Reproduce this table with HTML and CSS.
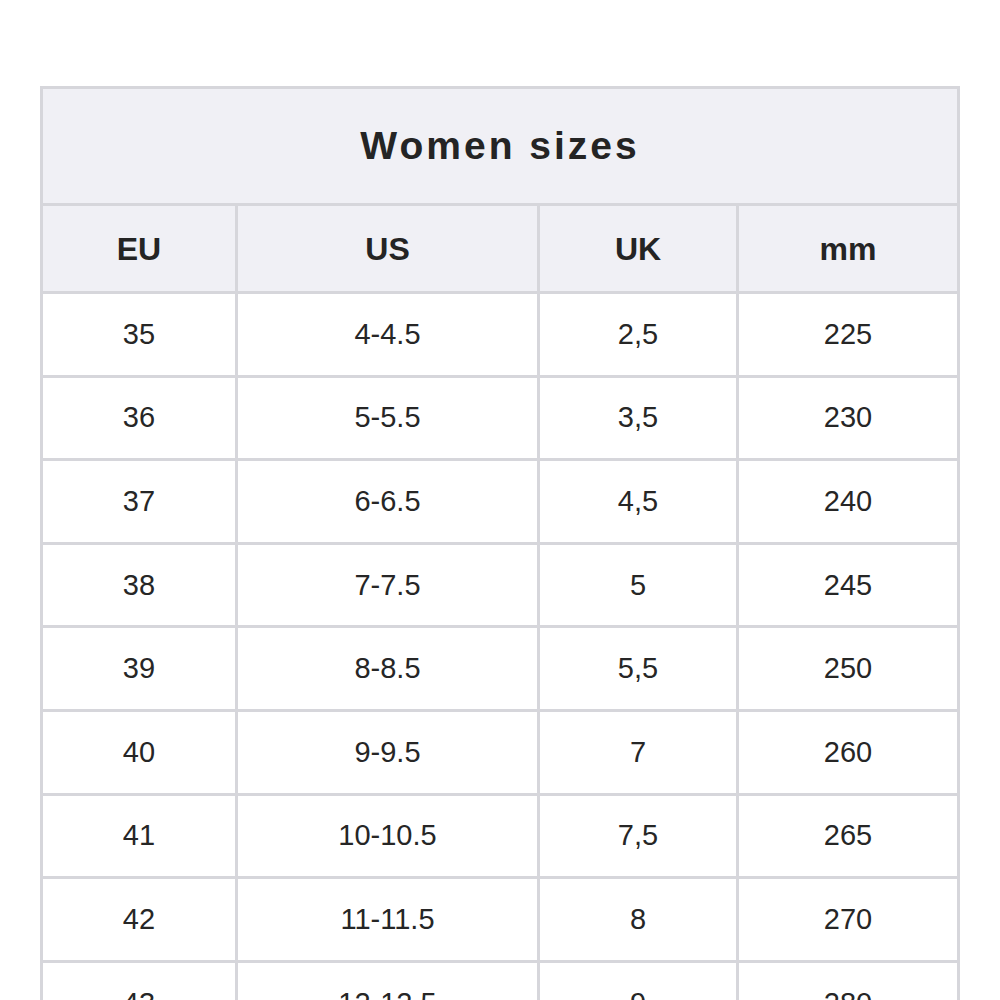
FILE: index.html
```html
<!DOCTYPE html>
<html lang="en">
<head>
<meta charset="utf-8">
<title>Women sizes</title>
<link rel="stylesheet" href="styles.css">
</head>
<body>
<div class="page">
  <table class="sizes">
    <colgroup>
      <col class="c-eu">
      <col class="c-us">
      <col class="c-uk">
      <col class="c-mm">
    </colgroup>
    <thead>
      <tr class="title-row"><th colspan="4" class="title">Women sizes</th></tr>
      <tr class="head-row"><th>EU</th><th>US</th><th>UK</th><th>mm</th></tr>
    </thead>
    <tbody>
      <tr><td>35</td><td>4-4.5</td><td>2,5</td><td>225</td></tr>
      <tr><td>36</td><td>5-5.5</td><td>3,5</td><td>230</td></tr>
      <tr><td>37</td><td>6-6.5</td><td>4,5</td><td>240</td></tr>
      <tr><td>38</td><td>7-7.5</td><td>5</td><td>245</td></tr>
      <tr><td>39</td><td>8-8.5</td><td>5,5</td><td>250</td></tr>
      <tr><td>40</td><td>9-9.5</td><td>7</td><td>260</td></tr>
      <tr><td>41</td><td>10-10.5</td><td>7,5</td><td>265</td></tr>
      <tr><td>42</td><td>11-11.5</td><td>8</td><td>270</td></tr>
      <tr><td>43</td><td>12-12.5</td><td>9</td><td>280</td></tr>
    </tbody>
  </table>
</div>
</body>
</html>
```
FILE: styles.css
```css
html, body {
  margin: 0;
  padding: 0;
  background: #ffffff;
}
body {
  font-family: "Liberation Sans", Arial, Helvetica, sans-serif;
  color: #222222;
}
.page {
  padding: 86px 40px 0 40px;
}
.sizes {
  width: 920px;
  table-layout: fixed;
  border-collapse: separate;
  border-spacing: 0;
  border-top: 3px solid #d6d6db;
  border-left: 3px solid #d6d6db;
}
.c-eu { width: 195px; }
.c-us { width: 302px; }
.c-uk { width: 199px; }
.c-mm { width: 221px; }
.sizes th,
.sizes td {
  border-right: 3px solid #d6d6db;
  border-bottom: 3px solid #d6d6db;
  text-align: center;
  vertical-align: middle;
  padding: 0;
  box-sizing: border-box;
}
.sizes th {
  background: #f0f0f5;
  font-weight: bold;
  color: #242424;
}
.title-row th {
  height: 117px;
  font-size: 39px;
  letter-spacing: 3px;
  padding-top: 0;
}
.head-row th {
  height: 88px;
  font-size: 32px;
  padding-top: 2px;
}
.sizes td {
  height: 83.6px;
  font-size: 29px;
  color: #262626;
  background: #ffffff;
}
```
